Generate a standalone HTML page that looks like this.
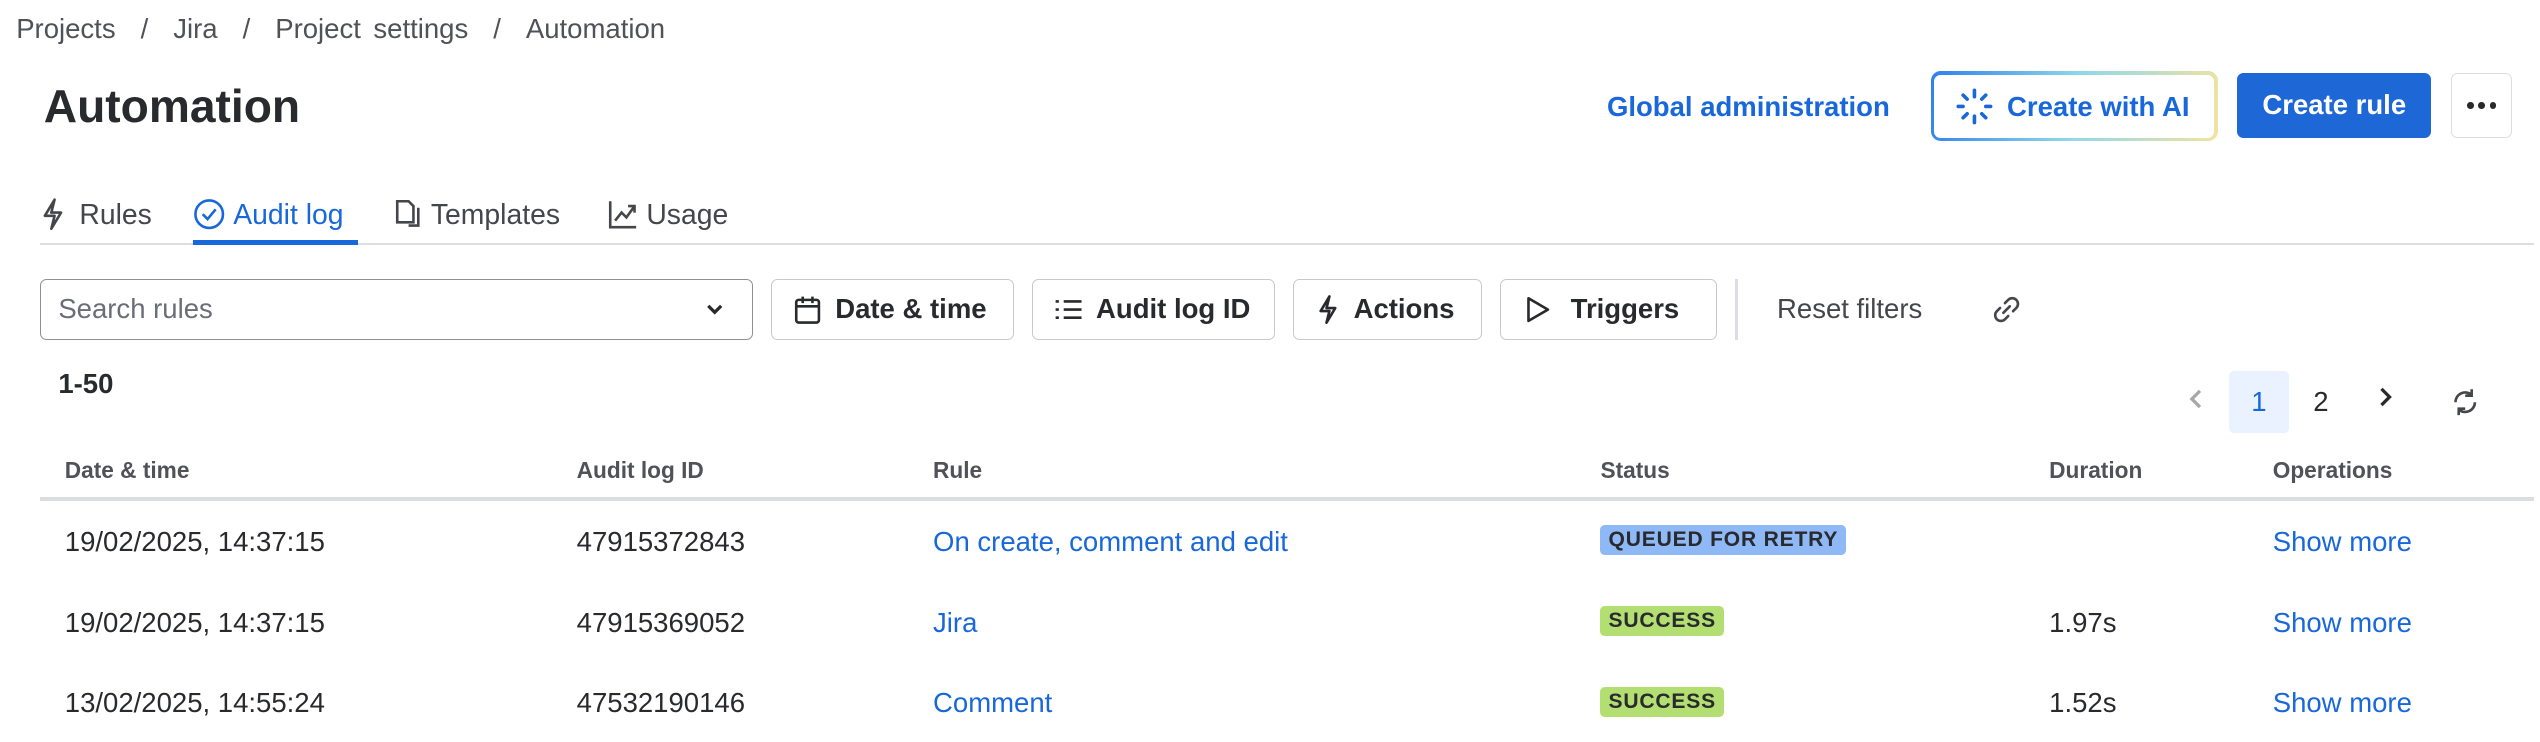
<!DOCTYPE html>
<html><head><meta charset="utf-8"><style>
html,body{margin:0;padding:0;background:#fff}
body{width:1568px;height:458px;zoom:1.6199;position:relative;overflow:hidden;font-family:"Liberation Sans",Arial,sans-serif;color:#292a2e}
.a{position:absolute;white-space:nowrap}
.bc{font-size:17px;color:#505258;top:8px;left:10px;word-spacing:3px}
h1{position:absolute;margin:0;left:27px;top:49px;font-size:28.5px;font-weight:bold;color:#292a2e}
.btn{position:absolute;box-sizing:border-box;border:1px solid #c8c9cd;border-radius:4px;height:38px;top:172px;display:flex;align-items:center;gap:8px;padding-left:13px;font-size:17px;color:#292a2e;font-weight:bold}
.btn svg{flex:none}
.th{position:absolute;top:282px;font-size:14px;color:#505258;font-weight:bold}
.td{position:absolute;font-size:17px;color:#292a2e}
.blue,.td.blue{color:#1868db}
.lz{position:absolute;font-size:13px;font-weight:bold;padding:2px 5px;border-radius:3px;color:#292a2e;letter-spacing:.5px}
</style></head><body>
<div class="a bc">Projects &nbsp;/ &nbsp;Jira &nbsp;/ &nbsp;Project settings &nbsp;/ &nbsp;Automation</div>
<h1>Automation</h1>
<div class="a blue" style="left:992px;top:56px;font-size:17px;font-weight:bold">Global administration</div>
<div class="a" style="left:1192px;top:44px;width:177px;height:43px;border-radius:6px;background:linear-gradient(100deg,#2f80ed,#8fd8e8 50%,#f2e3a0);"></div>
<div class="a" style="left:1194px;top:46px;width:173px;height:39px;border-radius:4px;background:#fff;"></div>
<svg class="a" style="left:1207px;top:54px" width="24" height="24" viewBox="0 0 24 24" stroke="#1868db" stroke-width="2.2" stroke-linecap="round"><path d="M12 2v4M12 18v4M2 12h3M19 12h3M5 5l2.5 2.5M16.5 16.5L19 19M5 19l2.5-2.5M16.5 7.5L19 5"/></svg>
<div class="a blue" style="left:1239px;top:56px;font-size:17px;font-weight:bold">Create with AI</div>
<div class="a" style="left:1381px;top:45px;width:120px;height:40px;border-radius:4px;background:#1d67d6;color:#fff;font-size:17px;font-weight:bold;text-align:center;line-height:40px">Create rule</div>
<div class="a" style="left:1513px;top:45px;width:38px;height:40px;box-sizing:border-box;border:1px solid #dcdde0;border-radius:4px;display:flex;align-items:center;justify-content:center;gap:3px"><i style="width:4px;height:4px;border-radius:2px;background:#292a2e"></i><i style="width:4px;height:4px;border-radius:2px;background:#292a2e"></i><i style="width:4px;height:4px;border-radius:2px;background:#292a2e"></i></div>

<!-- tabs -->
<svg class="a" style="left:25px;top:122px" width="16" height="20" viewBox="0 0 16 20" fill="none" stroke="#44464c" stroke-width="1.6" stroke-linejoin="round"><path d="M9 1L3 11h6l-2 8 6-10H7z"/></svg>
<div class="a" style="left:49px;top:123px;font-size:17.5px;color:#44464c">Rules</div>
<svg class="a" style="left:119px;top:122px" width="20" height="20" viewBox="0 0 20 20" fill="none" stroke="#1868db" stroke-width="1.6"><circle cx="10" cy="10" r="8.5"/><path d="M6 10l3 3 5-6"/></svg>
<div class="a blue" style="left:144px;top:123px;font-size:17.5px">Audit log</div>
<div class="a" style="left:25px;top:150px;width:1539px;height:1.5px;background:#dcdde0"></div>
<div class="a" style="left:119px;top:148px;width:102px;height:3px;background:#1868db"></div>
<svg class="a" style="left:243px;top:122px" width="18" height="20" viewBox="0 0 18 20" fill="none" stroke="#44464c" stroke-width="1.6"><path d="M2 2h7l3 3v10H2z"/><path d="M15 6v11h-6"/></svg>
<div class="a" style="left:266px;top:123px;font-size:17.5px;color:#44464c">Templates</div>
<svg class="a" style="left:375px;top:122px" width="20" height="20" viewBox="0 0 20 20" fill="none" stroke="#44464c" stroke-width="1.6"><path d="M2 2v16h16"/><path d="M5 14l4-5 3 3 5-7M13 5h4v4"/></svg>
<div class="a" style="left:399px;top:123px;font-size:17.5px;color:#44464c">Usage</div>

<!-- filters -->
<div class="a" style="left:25px;top:172px;width:440px;height:38px;box-sizing:border-box;border:1px solid #8c8f97;border-radius:4px"></div>
<div class="a" style="left:36px;top:181px;font-size:17px;color:#6b6e76">Search rules</div>
<svg class="a" style="left:435px;top:186px" width="12" height="10" viewBox="0 0 12 10" fill="none" stroke="#292a2e" stroke-width="2"><path d="M2 3l4 4 4-4"/></svg>
<div class="btn" style="left:476px;width:150px"><svg width="18" height="18" viewBox="0 0 18 18" fill="none" stroke="#292a2e" stroke-width="1.6"><rect x="2" y="3" width="14" height="14" rx="1.5"/><path d="M2 7h14M6 1v4M12 1v4"/></svg>Date &amp; time</div>
<div class="btn" style="left:637px;width:150px"><svg width="18" height="18" viewBox="0 0 18 18" fill="none" stroke="#292a2e" stroke-width="1.6"><path d="M1 4h2M1 9h2M1 14h2M6 4h11M6 9h11M6 14h11"/></svg>Audit log ID</div>
<div class="btn" style="left:798px;width:117px"><svg width="16" height="18" viewBox="0 0 16 20" fill="none" stroke="#292a2e" stroke-width="1.8" stroke-linejoin="round"><path d="M9 1L3 11h6l-2 8 6-10H7z"/></svg>Actions</div>
<div class="btn" style="left:926px;width:134px;gap:12px"><svg width="18" height="18" viewBox="0 0 18 18" fill="none" stroke="#292a2e" stroke-width="1.6" stroke-linejoin="round"><path d="M4 2l12 7-12 7z"/></svg>Triggers</div>
<div class="a" style="left:1071px;top:172px;width:2px;height:38px;background:#dcdde0"></div>
<div class="a" style="left:1097px;top:181px;font-size:17px;color:#44464c">Reset filters</div>
<svg class="a" style="left:1230px;top:182px" width="18" height="18" viewBox="0 0 18 18" fill="none" stroke="#44464c" stroke-width="1.6" stroke-linecap="round"><path d="M8 5l2-2a3.5 3.5 0 015 5l-2 2M10 13l-2 2a3.5 3.5 0 01-5-5l2-2M7 11l4-4"/></svg>

<div class="a" style="left:36px;top:227px;font-size:17px;font-weight:bold">1-50</div>
<svg class="a" style="left:1350px;top:238px" width="12" height="16" viewBox="0 0 12 16" fill="none" stroke="#a5a7ad" stroke-width="2"><path d="M8 3L3 8l5 5"/></svg>
<div class="a" style="left:1376px;top:229px;width:37px;height:38px;background:#e9f2fe;border-radius:3px;color:#1868db;font-size:17px;text-align:center;line-height:38px">1</div>
<div class="a" style="left:1428px;top:238px;font-size:17px">2</div>
<svg class="a" style="left:1466px;top:237px" width="12" height="16" viewBox="0 0 12 16" fill="none" stroke="#292a2e" stroke-width="2"><path d="M4 3l5 5-5 5"/></svg>
<svg class="a" style="left:1512px;top:238px" width="20" height="20" viewBox="0 0 20 20" fill="none" stroke="#44464c" stroke-width="1.6"><path d="M4 10a6 6 0 0110-4.5M16 10a6 6 0 01-10 4.5M14 2v4h-4M6 18v-4h4"/></svg>

<div class="th" style="left:40px">Date &amp; time</div>
<div class="th" style="left:356px">Audit log ID</div>
<div class="th" style="left:576px">Rule</div>
<div class="th" style="left:988px">Status</div>
<div class="th" style="left:1265px">Duration</div>
<div class="th" style="left:1403px">Operations</div>
<div class="a" style="left:25px;top:307px;width:1539px;height:2px;background:#dcdde0"></div>

<div class="td" style="left:40px;top:325px">19/02/2025, 14:37:15</div>
<div class="td" style="left:356px;top:325px">47915372843</div>
<div class="td blue" style="left:576px;top:325px">On create, comment and edit</div>
<div class="lz" style="left:988px;top:324px;background:#8fb8f6">QUEUED FOR RETRY</div>
<div class="td blue" style="left:1403px;top:325px">Show more</div>

<div class="td" style="left:40px;top:375px">19/02/2025, 14:37:15</div>
<div class="td" style="left:356px;top:375px">47915369052</div>
<div class="td blue" style="left:576px;top:375px">Jira</div>
<div class="lz" style="left:988px;top:374px;background:#b3df72">SUCCESS</div>
<div class="td" style="left:1265px;top:375px">1.97s</div>
<div class="td blue" style="left:1403px;top:375px">Show more</div>

<div class="td" style="left:40px;top:424px">13/02/2025, 14:55:24</div>
<div class="td" style="left:356px;top:424px">47532190146</div>
<div class="td blue" style="left:576px;top:424px">Comment</div>
<div class="lz" style="left:988px;top:424px;background:#b3df72">SUCCESS</div>
<div class="td" style="left:1265px;top:424px">1.52s</div>
<div class="td blue" style="left:1403px;top:424px">Show more</div>
</body></html>
